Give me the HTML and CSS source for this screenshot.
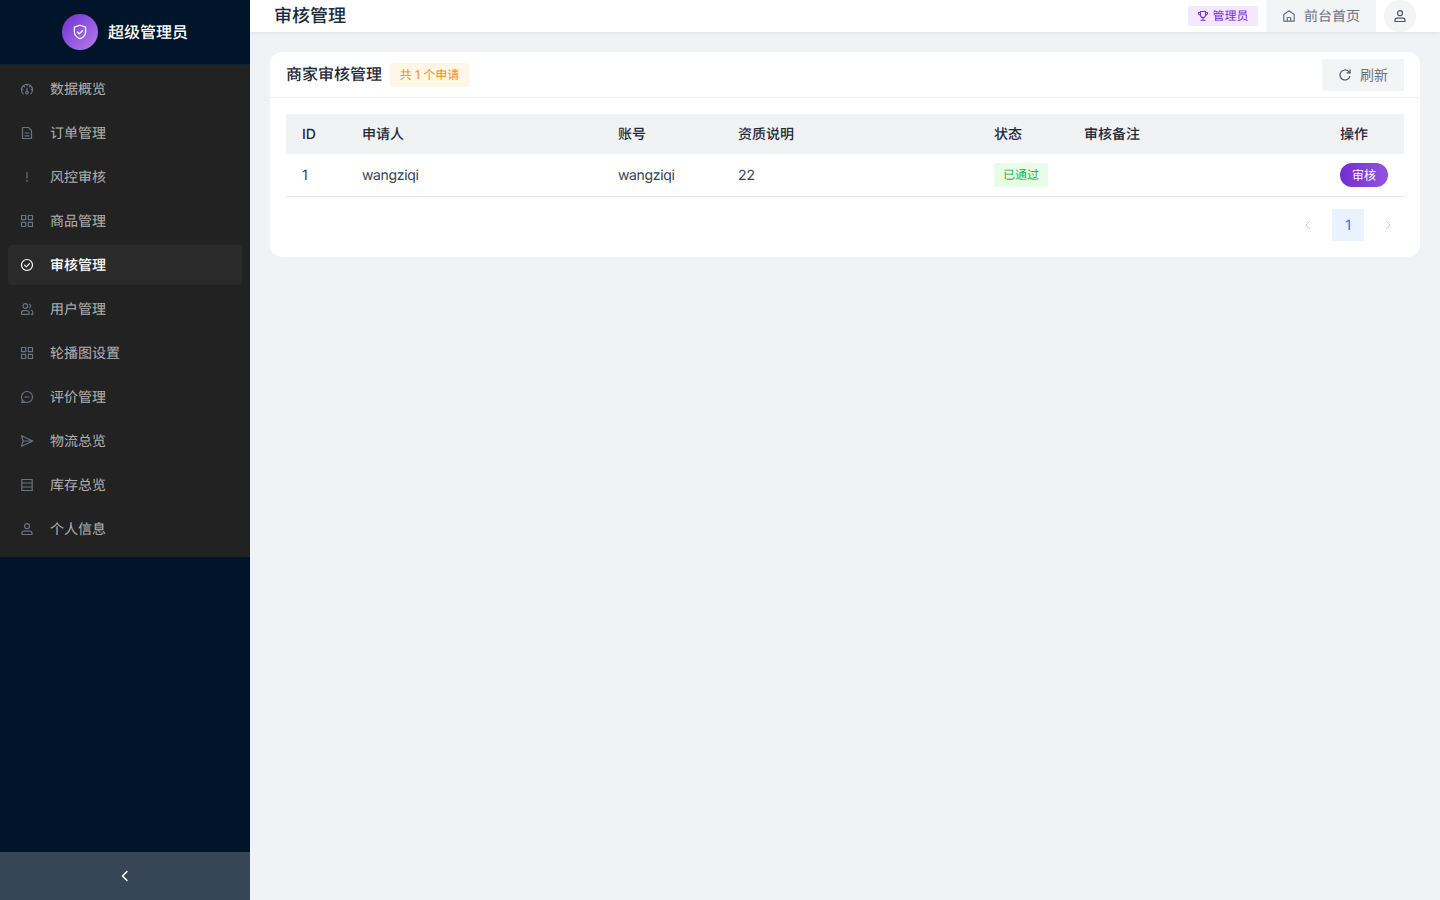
FILE: index.html
```html
<!DOCTYPE html>
<html lang="zh">
<head>
<meta charset="utf-8">
<title>审核管理</title>
<link rel="stylesheet" href="styles.css">
</head>
<body>
<div class="app">
  <aside class="sider">
    <div class="brand">
      <span class="brand-logo">
        <svg viewBox="0 0 24 24" class="brand-icon"><path d="M12 3l7.500 2.600v6c0 4.600-3 7.600-7.500 9.400-4.500-1.800-7.500-4.800-7.500-9.400v-6z"/><path d="M8.500 12l2.500 2.500 4.500-4.500"/></svg>
      </span>
      <span class="brand-name">超级管理员</span>
    </div>
    <nav class="menu">
      <a class="menu-item"><svg viewBox="0 0 14 14" class="mi"><path d="M3.200 11.800A5.500 5.500 0 1 1 10.800 11.800"/><circle cx="7" cy="10.600" r="1.300"/><path d="M7 9.300V6M4 4.300l.6.6M10 4.300l-.6.6M1.800 7.600h1M11.200 7.600h1M7 2.400v1"/></svg><span>数据概览</span></a>
      <a class="menu-item"><svg viewBox="0 0 14 14" class="mi"><path d="M2.500 1.500h6l3 3v8h-9z"/><path d="M5 7h4M5 9.800h4"/></svg><span>订单管理</span></a>
      <a class="menu-item"><svg viewBox="0 0 14 14" class="mi"><path d="M7 2.500v5.500M7 10.300v1.200"/></svg><span>风控审核</span></a>
      <a class="menu-item"><svg viewBox="0 0 14 14" class="mi"><path d="M1.500 1.500h4.200v4.200H1.500zM8.300 1.500h4.200v4.200H8.300zM1.500 8.300h4.200v4.200H1.500zM8.300 8.300h4.200v4.200H8.300z"/></svg><span>商品管理</span></a>
      <a class="menu-item is-active"><svg viewBox="0 0 14 14" class="mi"><circle cx="7" cy="7" r="5.500"/><path d="M4.600 7.200l1.700 1.700 3.200-3.300"/></svg><span>审核管理</span></a>
      <a class="menu-item"><svg viewBox="0 0 14 14" class="mi"><circle cx="5.300" cy="4" r="2.300"/><path d="M1.500 12.300v-1.600c0-1.200 1-2 2-2h3.600c1 0 2 .8 2 2v1.600z"/><path d="M9.500 2.200a2 2 0 0 1 0 3.600M11.200 8.300c.9.400 1.500 1.100 1.500 2v2h-1.500"/></svg><span>用户管理</span></a>
      <a class="menu-item"><svg viewBox="0 0 14 14" class="mi"><path d="M1.500 1.500h4.200v4.200H1.500zM8.300 1.500h4.200v4.200H8.300zM1.500 8.300h4.200v4.200H1.500zM8.300 8.300h4.200v4.200H8.300z"/></svg><span>轮播图设置</span></a>
      <a class="menu-item"><svg viewBox="0 0 14 14" class="mi"><path d="M7 1.500a5.500 5.500 0 0 1 0 11 5.500 5.500 0 0 1-5.500-5.500A5.500 5.500 0 0 1 7 1.500z"/><path d="M5 7h4M2.500 10.500l-1 2h3"/></svg><span>评价管理</span></a>
      <a class="menu-item"><svg viewBox="0 0 14 14" class="mi"><path d="M1.500 1.800L12.800 7 1.500 12.200 3.200 7zM3.200 7h9.600"/></svg><span>物流总览</span></a>
      <a class="menu-item"><svg viewBox="0 0 14 14" class="mi"><path d="M1.800 1.500h10.400v11H1.800zM1.800 5h10.400M1.800 9h10.400"/></svg><span>库存总览</span></a>
      <a class="menu-item"><svg viewBox="0 0 14 14" class="mi"><circle cx="7" cy="4.200" r="2.500"/><path d="M2 12.500v-1.400c0-1.200 1-2 2.200-2h5.600c1.200 0 2.200.8 2.200 2v1.400z"/></svg><span>个人信息</span></a>
    </nav>
    <div class="sider-spacer"></div>
    <button class="collapse"><svg viewBox="0 0 14 14" class="collapse-icon"><path d="M9 2.500L4.500 7 9 11.500"/></svg></button>
  </aside>
  <div class="main">
    <header class="topbar">
      <h1 class="page-title">审核管理</h1>
      <div class="top-actions">
        <span class="role-tag"><svg viewBox="0 0 14 14" class="role-icon"><path d="M4 1.800h6v4a3 3 0 0 1-6 0zM4 2.800H1.800v1.400c0 1 .8 1.900 2.300 2M10 2.800h2.200v1.400c0 1-.8 1.900-2.300 2M7 8.800v2.700M4.500 12h5"/></svg>管理员</span>
        <a class="home-link"><svg viewBox="0 0 14 14" class="home-icon"><path d="M1.800 12.200V5.600L7 1.800l5.200 3.800v6.600z"/><path d="M5.300 12.200V8.500h3.400v3.700"/></svg>前台首页</a>
        <span class="avatar"><svg viewBox="0 0 14 14" class="avatar-icon"><circle cx="7" cy="4.200" r="2.500"/><path d="M2 12.500v-1.400c0-1.200 1-2 2.200-2h5.600c1.200 0 2.200.8 2.200 2v1.400z"/></svg></span>
      </div>
    </header>
    <main class="content">
      <section class="card">
        <div class="card-head">
          <div class="card-title-wrap">
            <h2 class="card-title">商家审核管理</h2>
            <span class="count-tag">共 1 个申请</span>
          </div>
          <button class="refresh"><svg viewBox="0 0 14 14" class="refresh-icon"><path d="M11.800 8.300A5 5 0 1 1 10.500 3.400l1.500 1.400"/><path d="M12 1.800v3h-3"/></svg>刷新</button>
        </div>
        <div class="card-body">
          <table class="data-table">
            <colgroup>
              <col class="c-id"><col class="c-wide"><col class="c-acc"><col class="c-wide"><col class="c-status"><col class="c-wide"><col class="c-op">
            </colgroup>
            <thead>
              <tr><th>ID</th><th>申请人</th><th>账号</th><th>资质说明</th><th>状态</th><th>审核备注</th><th>操作</th></tr>
            </thead>
            <tbody>
              <tr>
                <td class="text-cell">1</td><td class="text-cell name-cell">wangziqi</td><td class="text-cell name-cell">wangziqi</td><td class="text-cell">22</td>
                <td><span class="status-tag">已通过</span></td>
                <td></td>
                <td><button class="audit-btn">审核</button></td>
              </tr>
            </tbody>
          </table>
          <div class="pager">
            <span class="pg-nav"><svg viewBox="0 0 12 12" class="pg-icon"><path d="M7.500 2.500L4 6l3.500 3.500"/></svg></span>
            <span class="pg-item">1</span>
            <span class="pg-nav"><svg viewBox="0 0 12 12" class="pg-icon"><path d="M4.500 2.500L8 6 4.500 9.500"/></svg></span>
          </div>
        </div>
      </section>
    </main>
  </div>
</div>
</body>
</html>
```
FILE: styles.css
```css
* { box-sizing: border-box; }
html, body { margin: 0; height: 100%; }
body {
  font-family: Inter, "Noto Sans CJK SC", "Noto Sans", sans-serif;
  font-size: 14px;
  line-height: 23px;
  color: #1f2937;
  background: #f0f2f5;
  overflow: hidden;
  text-rendering: geometricPrecision;
}
svg { fill: none; stroke: currentColor; stroke-linecap: round; stroke-linejoin: round; display: block; }
.app { display: flex; height: 900px; }

.sider { width: 250px; flex: none; background: #001529; display: flex; flex-direction: column; }
.brand {
  height: 65px; flex: none; display: flex; align-items: center; justify-content: center; gap: 10px;
  border-bottom: 1px solid #0d2436;
}
.brand-logo {
  width: 36px; height: 36px; border-radius: 50%;
  background: linear-gradient(135deg, #722ed1, #b37feb);
  display: flex; align-items: center; justify-content: center; color: #fff;
}
.brand-icon { width: 18px; height: 18px; stroke-width: 1.700; }
.brand-name { color: #fff; font-size: 16px; font-weight: 500; line-height: 20px; }
.menu { background: #222222; padding: 4px 8px; display: flex; flex-direction: column; }
.menu-item {
  height: 40px; margin-bottom: 4px; padding-left: 12px; display: flex; align-items: center; gap: 16px;
  color: rgba(255, 255, 255, 0.65); border-radius: 4px; font-size: 14px;
}
.mi { width: 14px; height: 14px; color: #6b7280; stroke-width: 1.200; flex: none; }
.menu-item.is-active { background: #2a2a2a; color: #fff; font-weight: 500; }
.menu-item.is-active .mi { color: #fff; }
.sider-spacer { flex: 1; }
.collapse {
  height: 48px; flex: none; border: 0; padding: 0; background: #374657; color: #fff;
  display: flex; align-items: center; justify-content: center;
}
.collapse-icon { width: 14px; height: 14px; stroke-width: 1.500; }

.main { flex: 1; min-width: 0; display: flex; flex-direction: column; }
.topbar {
  height: 32px; flex: none; background: #fff; box-shadow: 0 1px 4px rgba(0, 21, 41, 0.08);
  padding: 0 24px; display: flex; align-items: center; justify-content: space-between; position: relative;
}
.page-title { margin: 0; font-size: 18px; font-weight: 500; color: #1f2937; line-height: 33px; }
.top-actions { display: flex; align-items: center; gap: 8px; }
.role-tag {
  height: 20px; width: 70px; background: #f3e8ff; color: #722ed1; border-radius: 2px; font-size: 12px;
  line-height: 20px; display: flex; align-items: center; justify-content: center; gap: 3px;
}
.role-icon { width: 12px; height: 12px; stroke-width: 1.200; }
.home-link {
  width: 110px; height: 32px; background: #f3f4f6; color: #6b7280; display: flex; align-items: center;
  justify-content: center; gap: 8px; border-radius: 2px;
}
.home-icon { width: 14px; height: 14px; stroke-width: 1.200; }
.avatar {
  width: 32px; height: 32px; border-radius: 50%; background: #f3f4f6; color: #4b5563;
  display: flex; align-items: center; justify-content: center;
}
.avatar-icon { width: 14px; height: 14px; stroke-width: 1.200; }

.content { flex: 1; padding: 20px; }
.card { background: #fff; border-radius: 12px; }
.card-head {
  height: 46px; padding: 0 16px; display: flex; align-items: center; justify-content: space-between;
  border-bottom: 1px solid #f0f0f0;
}
.card-title-wrap { display: flex; align-items: center; gap: 8px; }
.card-title { margin: 0 0 1px; font-size: 16px; font-weight: 500; color: #1f2937; line-height: 24px; }
.count-tag {
  height: 24px; width: 79px; background: #fff7e6; color: #fa8c16; font-size: 12px; border-radius: 2px;
  display: flex; align-items: center; justify-content: center;
}
.refresh {
  width: 82px; height: 32px; border: 0; background: #f3f4f6; color: #6b7280; font: inherit; border-radius: 2px;
  display: flex; align-items: center; justify-content: center; gap: 8px; padding: 0;
}
.refresh-icon { width: 14px; height: 14px; stroke-width: 1.200; color: #4b5563; }
.card-body { padding: 16px; }
.data-table { width: 100%; table-layout: fixed; border-collapse: collapse; }
.c-id { width: 60px; }
.c-wide { width: 256px; }
.c-acc { width: 120px; }
.c-status { width: 90px; }
.c-op { width: 80px; }
.data-table th {
  height: 40px; padding: 0 16px; background: #f1f2f4; text-align: left; font-weight: 500; color: #1f2937; font-size: 14px;
}
.data-table td { height: 42px; padding: 0 16px; border-bottom: 1px solid #e5e7eb; color: #374151; font-size: 14px; }
.data-table .text-cell { padding-top: 2px; }
.data-table .name-cell { letter-spacing: -0.35px; }
.status-tag {
  display: inline-flex; align-items: center; height: 24px; padding: 0 9px; background: #e8fde8; color: #16b34a;
  font-size: 12px; border-radius: 2px; vertical-align: middle;
}
.audit-btn {
  width: 48px; height: 24px; border: 0; padding: 1px 0 0; border-radius: 12px; color: #fff; font: inherit; font-size: 12px;
  background: linear-gradient(90deg, #722ed1, #9254de); display: block;
}
.pager { display: flex; justify-content: flex-end; align-items: center; margin-top: 12px; }
.pg-nav { width: 32px; height: 32px; margin: 0 0 0 8px; display: flex; align-items: center; justify-content: center; color: #c9cdd4; }
.pg-nav:first-child { margin: 0; }
.pg-icon { width: 12px; height: 12px; stroke-width: 1; }
.pg-item {
  width: 32px; height: 32px; margin-left: 8px; padding-top: 2px; background: #e8f3ff; color: #1677ff; border-radius: 2px;
  display: flex; align-items: center; justify-content: center;
}
```
